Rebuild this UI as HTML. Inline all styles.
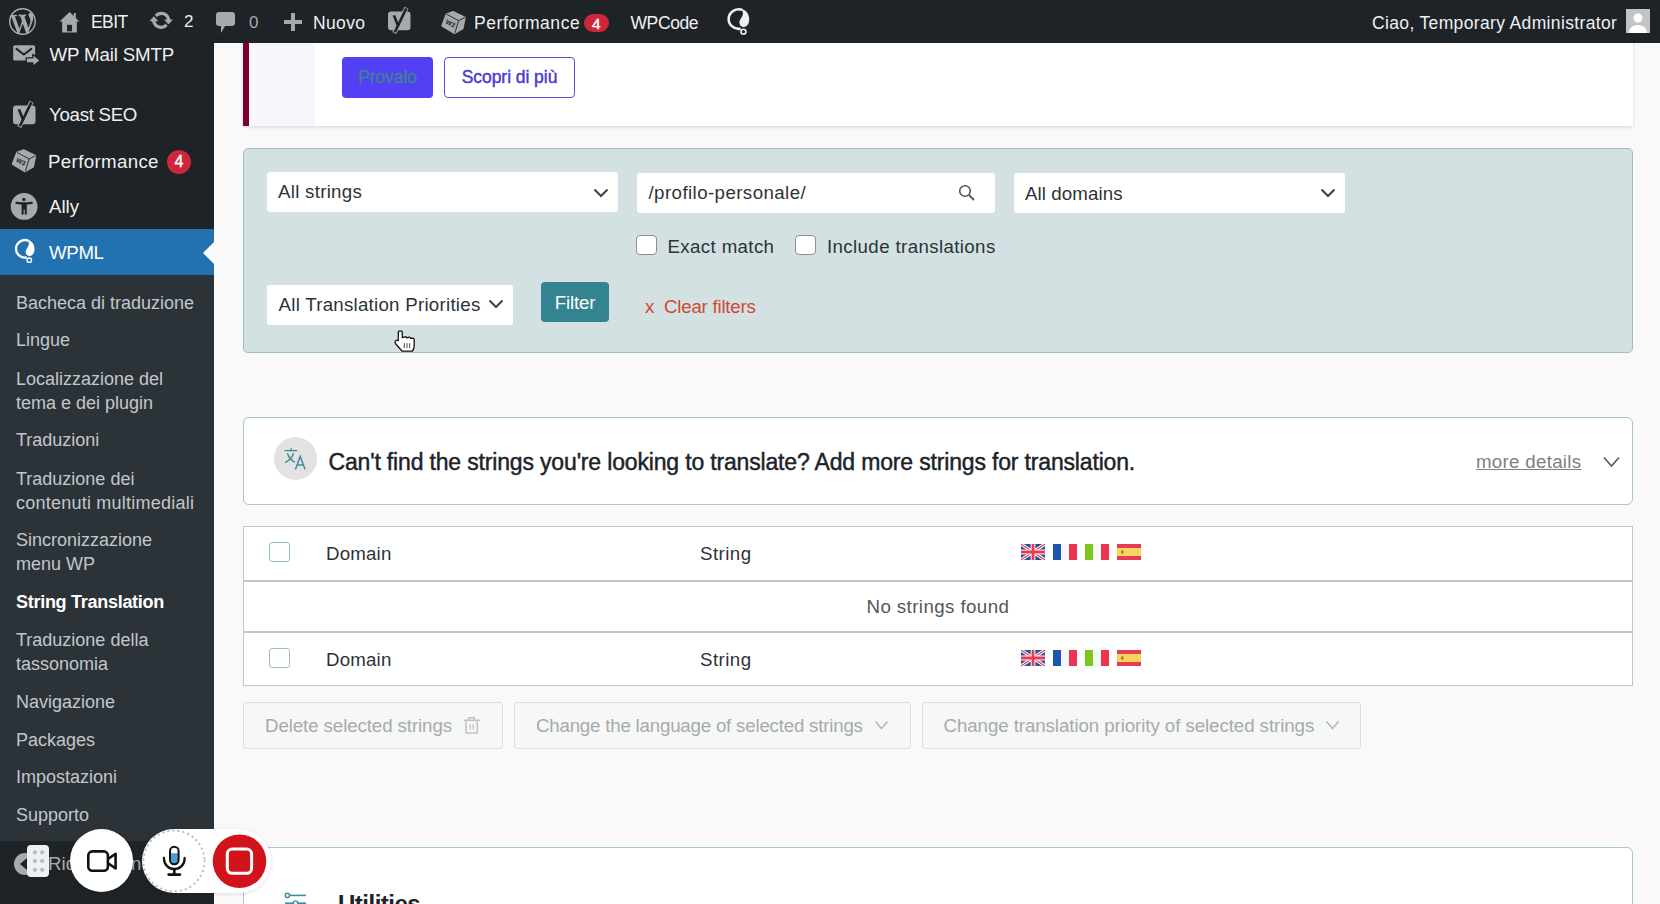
<!DOCTYPE html>
<html><head><meta charset="utf-8">
<style>
*{box-sizing:border-box;margin:0;padding:0}
html,body{width:1660px;height:904px;overflow:hidden;background:#f9f9f9;font-family:"Liberation Sans",sans-serif;position:relative}
.a{position:absolute;white-space:nowrap}
#bar{position:absolute;z-index:10;left:0;top:0;width:1660px;height:43px;background:#1d2327;color:#f0f0f1;font-size:17px}
#side{position:absolute;left:0;top:43px;width:214px;height:861px;background:#1d2327}
#sub{position:absolute;left:0;top:275px;width:214px;height:566px;background:#2c3338}
.mm{color:#f0f0f1;font-size:18.7px}
.sm{color:#c3c6c9;font-size:18px;line-height:24px}
.ic{fill:#a7aaad}
.box{position:absolute;left:243px;width:1390px}
.sel{position:absolute;background:#fff;border-radius:3px;color:#2c3338;font-size:18.7px}
.chev{position:absolute}
.cb{position:absolute;width:21px;height:20px;border:1.5px solid #8c8f94;border-radius:4px;background:#fff}
.btn{position:absolute;border:1.5px solid #dcdcde;background:#f6f7f7;border-radius:3px;color:#a7aaad;font-size:18.7px;height:47px;top:702px}
</style></head><body>

<!-- ADMIN BAR -->
<div id="bar">
  <!-- WP logo -->
  <svg class="a" style="left:9px;top:8px" width="27" height="27" viewBox="0 0 20 20"><path fill="#a7aaad" d="M20 10c0-5.52-4.48-10-10-10S0 4.48 0 10s4.48 10 10 10 10-4.48 10-10zM7.780 15.370L4.370 6.220c.55-.02 1.170-.08 1.170-.08.5-.06.44-1.130-.06-1.110 0 0-1.450.11-2.370.11-.18 0-.37 0-.58-.01C4.120 2.690 6.870 1.110 10 1.110c2.330 0 4.450.87 6.050 2.340-.68-.11-1.650.39-1.650 1.580 0 .74.45 1.360.9 2.100.35.61.55 1.360.55 2.460 0 1.490-1.400 5-1.400 5l-3.030-8.370c.54-.02.82-.17.82-.17.5-.05.44-1.250-.06-1.220 0 0-1.440.12-2.380.12-.87 0-2.330-.12-2.330-.12-.5-.03-.56 1.200-.06 1.220l.92.08 1.260 3.410zM17.410 10c.24-.64.74-1.870.43-4.250.7 1.290 1.050 2.710 1.050 4.250 0 3.290-1.730 6.240-4.400 7.780.97-2.590 1.940-5.200 2.920-7.780zM6.100 18.090C3.120 16.650 1.110 13.530 1.110 10c0-1.300.23-2.480.72-3.590C3.250 10.300 4.670 14.200 6.100 18.090zm4.030-6.630l2.580 6.980c-.86.29-1.760.45-2.710.45-.79 0-1.570-.11-2.290-.33.81-2.380 1.620-4.740 2.420-7.100z"/></svg>
  <!-- home -->
  <svg class="a" style="left:59px;top:11px" width="21" height="22" viewBox="0 0 20 21"><path fill="#a7aaad" d="M10 1 L0.5 10 H3 V20.5 H17 V10 H19.5 L16 6.7 V2 H14 V4.8 Z"/><rect x="7.6" y="13.2" width="4.8" height="6.2" fill="#1d2327"/></svg>
  <div class="a" style="left:91px;top:12px;font-size:17.5px;letter-spacing:-0.6px">EBIT</div>
  <!-- updates -->
  <svg class="a" style="left:0;top:0" width="200" height="43" viewBox="0 0 200 43"><g transform="translate(148.4 7.6) scale(1.28)"><path fill="#a7aaad" d="M10.2 3.28c3.53 0 6.43 2.61 6.92 6h2.08l-3.5 4-3.5-4h2.32c-.45-1.97-2.21-3.450-4.320-3.450-1.450 0-2.730.71-3.540 1.780L4.950 5.660C6.230 4.200 8.110 3.280 10.200 3.280zm-.4 13.440c-3.520 0-6.430-2.610-6.920-6H.8l3.500-4c1.170 1.330 2.330 2.670 3.500 4H5.480c.450 1.970 2.210 3.450 4.320 3.450 1.450 0 2.730-.710 3.540-1.780l1.710 1.950c-1.280 1.460-3.150 2.380-5.250 2.380z"/></g></svg>
  <div class="a" style="left:184px;top:12px;font-size:17px">2</div>
  <!-- comments -->
  <svg class="a" style="left:216px;top:12px" width="19" height="21" viewBox="0 0 19 21"><path fill="#a7aaad" d="M3 0h13c1.700 0 3 1.300 3 3v8c0 1.700-1.300 3-3 3H9l-4 7v-7H3c-1.700 0-3-1.300-3-3V3c0-1.700 1.300-3 3-3z"/></svg>
  <div class="a" style="left:249px;top:13px;font-size:17px;color:#a7aaad">0</div>
  <!-- plus -->
  <svg class="a" style="left:284px;top:13px" width="18" height="18" viewBox="0 0 18 18"><path fill="#a7aaad" d="M7 0h4v7h7v4h-7v7H7v-7H0V7h7z"/></svg>
  <div class="a" style="left:313px;top:12.5px;font-size:17.5px;letter-spacing:0.35px">Nuovo</div>
  <!-- yoast -->
  <svg class="a" style="left:0;top:0" width="800" height="43" viewBox="0 0 800 43">
    <g transform="translate(375 -94)"><rect x="13" y="105.6" width="22.5" height="18.6" rx="3.2" fill="#a7aaad"/>
    <path d="M31.5 101.8 L19.3 127" stroke="#a7aaad" stroke-width="4.4"/>
    <path d="M31.3 102.4 L19.8 126.2" stroke="#1d2327" stroke-width="2.6"/>
    <path d="M17.6 109.4 L20.4 109.2 L24.3 119.6 L22.6 122.3 Z" fill="#1d2327"/></g>
    <g transform="translate(429.5 -138.3)"><path d="M16.9 152.4 L23.6 150 L35.5 155.7 L33.3 166.8 L24.9 171.6 L12.5 164.1 Z" fill="#a7aaad" stroke="#a7aaad" stroke-width="1.5" stroke-linejoin="round"/>
    <path d="M16.9 152.4 L29.1 159 L35.5 155.7 M29.1 159 L25.4 171.4" fill="none" stroke="#1d2327" stroke-width="0.9"/>
    <text x="0" y="0" font-size="6.5" font-weight="bold" font-family="Liberation Sans" fill="#1d2327" transform="translate(15.6 161.5) rotate(27)">W3</text></g>
    <g transform="translate(724.8 7) scale(1.11) translate(-12.5 -238)">
      <path d="M28.2 240.6 A9.1 8.8 0 1 0 26.8 257.5" fill="none" stroke="#f0f0f1" stroke-width="2.3"/>
      <path d="M27.2 239.6 C32.2 240.8 34.6 244.8 34.5 249.3 C34.4 253.5 32.2 256 29.7 256 C27 256 25.3 253.6 25.7 251.2 C26.1 248.8 28.5 247 28.8 244.5 C29 243 28.5 241.2 27.2 239.6 Z" fill="#f0f0f1"/>
      <circle cx="29.3" cy="260.2" r="2.2" fill="none" stroke="#f0f0f1" stroke-width="1.4"/>
    </g>
  </svg>
  <div class="a" style="left:474px;top:12.5px;font-size:17.5px;letter-spacing:0.55px">Performance</div>
  <div class="a" style="left:584px;top:14px;width:24.5px;height:18px;border-radius:9px;background:#d0263b;color:#fff;font-size:15.5px;-webkit-text-stroke:0.4px #fff;text-align:center;line-height:19px">4</div>
  <div class="a" style="left:630.5px;top:12.5px;font-size:17.5px;letter-spacing:-0.4px">WPCode</div>
  <div class="a" style="left:1372px;top:12.5px;font-size:17.5px;letter-spacing:0.35px">Ciao, Temporary Administrator</div>
  <div class="a" style="left:1626px;top:9px;width:24px;height:24px;background:#c3c4c7"><svg width="24" height="24" viewBox="0 0 24 24"><circle cx="12" cy="9" r="4.500" fill="#fff"/><path fill="#fff" d="M3 24c0-5 4-8 9-8s9 3 9 8z"/></svg></div>
</div>

<!-- SIDEBAR -->
<div id="side"></div>
<div id="sub"></div>
<div id="sidecontent">
  <svg class="a" style="left:0;top:0;z-index:5" width="214" height="904" viewBox="0 0 214 904">
    <!-- mail smtp -->
    <rect x="13.2" y="45.3" width="21.9" height="15.3" rx="1.6" fill="#a7aaad"/>
    <path d="M15.8 48.4 L23.9 54.6 L32 48.4" fill="none" stroke="#1d2327" stroke-width="2"/>
    <path d="M26.2 57.9 h6.6 v-3.6 l7.4 6.1 l-7.4 6.2 v-3.7 h-6.6 z" fill="#a7aaad" stroke="#1d2327" stroke-width="1.3" stroke-linejoin="round"/>
    <!-- yoast -->
    <rect x="13" y="105.6" width="22.5" height="18.6" rx="3.2" fill="#a7aaad"/>
    <path d="M31.5 101.8 L19.3 127" stroke="#a7aaad" stroke-width="4.4"/>
    <path d="M31.3 102.4 L19.8 126.2" stroke="#1d2327" stroke-width="2.6"/>
    <path d="M17.6 109.4 L20.4 109.2 L24.3 119.6 L22.6 122.3 Z" fill="#1d2327"/>
    <!-- performance cube -->
    <path d="M16.9 152.4 L23.6 150 L35.5 155.7 L33.3 166.8 L24.9 171.6 L12.5 164.1 Z" fill="#a7aaad" stroke="#a7aaad" stroke-width="1.5" stroke-linejoin="round"/>
    <path d="M16.9 152.4 L29.1 159 L35.5 155.7 M29.1 159 L25.4 171.4" fill="none" stroke="#1d2327" stroke-width="0.9"/>
    <text x="0" y="0" font-size="6.5" font-weight="bold" font-family="Liberation Sans" fill="#1d2327" transform="translate(15.6 161.5) rotate(27)">W3</text>
    <!-- ally -->
    <circle cx="24.15" cy="206.4" r="13.4" fill="#a7aaad"/>
    <circle cx="23.9" cy="199.4" r="1.7" fill="#1d2327"/>
    <path d="M16.4 202.8 Q24 204 31.8 202.8" stroke="#1d2327" stroke-width="2.2" stroke-linecap="round" fill="none"/>
    <path d="M21.6 203 h5.2 v11.6 h-2.1 v-5 h-1 v5 h-2.1 z" fill="#1d2327"/>
    <!-- wpml -->
    <path d="M28.2 240.6 A9.1 8.8 0 1 0 26.8 257.5" fill="none" stroke="#fff" stroke-width="2.3"/>
    <path d="M27.2 239.6 C32.2 240.8 34.6 244.8 34.5 249.3 C34.4 253.5 32.2 256 29.7 256 C27 256 25.3 253.6 25.7 251.2 C26.1 248.8 28.5 247 28.8 244.5 C29 243 28.5 241.2 27.2 239.6 Z" fill="#fff"/>
    <circle cx="29.3" cy="260.2" r="2.2" fill="none" stroke="#fff" stroke-width="1.4"/>
  </svg>

  <div class="a mm" style="left:49.5px;top:44px;letter-spacing:-0.15px">WP Mail SMTP</div>
  <div class="a mm" style="left:49px;top:104px;letter-spacing:-0.3px">Yoast SEO</div>
  <div class="a mm" style="left:48px;top:150.5px;letter-spacing:0.35px">Performance</div>
  <div class="a" style="left:167px;top:150px;width:24px;height:24px;border-radius:12px;background:#d0263b;color:#fff;font-size:16px;-webkit-text-stroke:0.4px #fff;text-align:center;line-height:24px">4</div>
  <div class="a mm" style="left:49px;top:196px">Ally</div>
  <div class="a" style="left:0;top:229px;width:214px;height:46px;background:#2271b1"></div>
  <div class="a mm" style="left:49px;top:241.5px;color:#fff;letter-spacing:-0.35px">WPML</div>
  <svg class="a" style="left:203px;top:242px" width="11" height="22" viewBox="0 0 11 22"><path fill="#f9f9f9" d="M11 0 L0 11 L11 22 Z"/></svg>
  <div class="a sm" style="left:16px;top:291px">Bacheca di traduzione</div>
  <div class="a sm" style="left:16px;top:328px">Lingue</div>
  <div class="a sm" style="left:16px;top:367px">Localizzazione del<br>tema e dei plugin</div>
  <div class="a sm" style="left:16px;top:428px">Traduzioni</div>
  <div class="a sm" style="left:16px;top:467px">Traduzione dei<br><span style="letter-spacing:0.23px">contenuti multimediali</span></div>
  <div class="a sm" style="left:16px;top:528px">Sincronizzazione<br>menu WP</div>
  <div class="a sm" style="left:16px;top:590px;color:#fff;font-weight:bold;letter-spacing:-0.28px">String Translation</div>
  <div class="a sm" style="left:16px;top:628px">Traduzione della<br>tassonomia</div>
  <div class="a sm" style="left:16px;top:690px">Navigazione</div>
  <div class="a sm" style="left:16px;top:728px">Packages</div>
  <div class="a sm" style="left:16px;top:765px">Impostazioni</div>
  <div class="a sm" style="left:16px;top:803px">Supporto</div>
  <div class="a sm" style="left:48px;top:851.5px;color:#a7aaad;font-size:18.7px">Riduci menu</div>
  <svg class="a" style="left:14px;top:853px" width="22" height="22" viewBox="0 0 22 22"><circle cx="11" cy="11" r="11" fill="#a7aaad"/><path fill="#1d2327" d="M13 5 L6 11 L13 17 Z"/></svg>
</div>

<!-- NOTICE -->
<div class="box" style="top:30px;height:96px;background:#fff;box-shadow:0 1px 3px rgba(0,0,0,.15)">
  <div class="a" style="left:0;top:0;width:6px;height:96px;background:#7d0034"></div>
  <div class="a" style="left:6px;top:0;width:66px;height:96px;background:#f7f6fc"></div>
  <div class="a" style="left:99px;top:27px;width:91px;height:41px;background:#5340f2;border-radius:4px;color:#3f7f9c;font-size:17.5px;-webkit-text-stroke:0.45px #3f7f9c;text-align:center;line-height:40px;letter-spacing:-0.1px">Provalo</div>
  <div class="a" style="left:201px;top:27px;width:131px;height:41px;border:1.5px solid #5b4fd0;border-radius:4px;color:#4b3bcf;font-size:17.5px;-webkit-text-stroke:0.45px #4b3bcf;text-align:center;line-height:38px;letter-spacing:-0.05px">Scopri di più</div>
</div>

<!-- FILTER PANEL -->
<div class="box" style="top:148px;height:205px;background:#d4e1e3;border:1.5px solid #9fbcc1;border-radius:5px"></div>
<div class="sel" style="left:267px;top:172px;width:351px;height:40px"><div class="a" style="left:11px;top:9px;letter-spacing:0.28px">All strings</div></div>
<svg class="chev" style="left:593px;top:188px" width="16" height="10" viewBox="0 0 16 10"><path d="M1.500 1.500 L8 8 L14.500 1.500" fill="none" stroke="#3c434a" stroke-width="2"/></svg>
<div class="sel" style="left:637px;top:173px;width:358px;height:40px"><div class="a" style="left:11.5px;top:8.5px;letter-spacing:0.42px">/profilo-personale/</div></div>
<svg class="a" style="left:958px;top:184px" width="18" height="17" viewBox="0 0 18 17"><circle cx="7" cy="7" r="5.300" fill="none" stroke="#50575e" stroke-width="1.600"/><path d="M11 11 L16 16" stroke="#50575e" stroke-width="1.800"/></svg>
<div class="sel" style="left:1014px;top:173px;width:331px;height:40px"><div class="a" style="left:11px;top:9.5px;letter-spacing:0.1px">All domains</div></div>
<svg class="chev" style="left:1320px;top:188px" width="16" height="11" viewBox="0 0 16 11"><path d="M1.500 1.500 L8 8 L14.500 1.500" fill="none" stroke="#3c434a" stroke-width="2"/></svg>
<div class="cb" style="left:636px;top:235px"></div>
<div class="a" style="left:667.5px;top:235.5px;font-size:18.7px;color:#2c3338;letter-spacing:0.37px">Exact match</div>
<div class="cb" style="left:795px;top:235px"></div>
<div class="a" style="left:827px;top:235.5px;font-size:18.7px;color:#2c3338;letter-spacing:0.38px">Include translations</div>
<div class="sel" style="left:267px;top:285px;width:246px;height:40px"><div class="a" style="left:11.5px;top:9px;letter-spacing:0.26px">All Translation Priorities</div></div>
<svg class="chev" style="left:488px;top:299px" width="16" height="11" viewBox="0 0 16 11"><path d="M1.500 1.500 L8 8 L14.500 1.500" fill="none" stroke="#3c434a" stroke-width="2"/></svg>
<div class="a" style="left:541px;top:282px;width:68px;height:40px;background:#33848f;border-radius:4px;color:#fff;font-size:18.7px;text-align:center;line-height:42px;letter-spacing:-0.2px">Filter</div>
<div class="a" style="left:645px;top:296px;font-size:18.7px;color:#cc4a33;letter-spacing:-0.23px">x&nbsp; Clear filters</div>

<!-- INFO BOX -->
<div class="box" style="top:417px;height:88px;background:#fff;border:1.5px solid #a5c7cb;border-radius:6px"></div>
<div class="a" style="left:274px;top:437px;width:43px;height:43px;border-radius:50%;background:#e2e2e2"></div>
<svg class="a" style="left:280px;top:444px" width="30" height="30" viewBox="280 444 30 30"><g fill="none" stroke="#3e8a94" stroke-width="1.4"><path d="M291.2 448.2 V450.6 M284.6 450.6 H297.2"/><path d="M287.4 453.3 Q289.5 459.5 294.9 462.4"/><path d="M293.6 453.3 Q291.5 459.5 285.2 462.6"/><path d="M295.4 469.6 L300.2 456.4 L305.1 469.6 M297.1 465 H303.4"/></g></svg>

<div class="a" style="left:328.5px;top:449px;font-size:23px;color:#1d2327;-webkit-text-stroke:0.45px #1d2327;letter-spacing:-0.165px">Can't find the strings you're looking to translate? Add more strings for translation.</div>
<div class="a" style="left:1476px;top:451px;font-size:18.7px;color:#7b7f84;text-decoration:underline;letter-spacing:0.3px">more details</div>
<svg class="a" style="left:1603px;top:456px" width="17" height="13" viewBox="0 0 17 13"><path d="M1 1.500 L8.500 10 L16 1.500" fill="none" stroke="#50575e" stroke-width="1.500"/></svg>

<!-- TABLE -->
<div class="box" style="top:526px;height:160px;background:#fff;border:1.5px solid #c3c4c7"></div>
<div class="a" style="left:244px;top:580px;width:1389px;height:1.5px;background:#c3c4c7"></div>
<div class="a" style="left:244px;top:631px;width:1389px;height:1.5px;background:#c3c4c7"></div>
<div class="cb" style="left:269px;top:542px;border-color:#9bbfc6;border-radius:3px"></div>
<div class="a" style="left:326px;top:543px;font-size:18.7px;color:#2c3338;letter-spacing:0.18px">Domain</div>
<div class="a" style="left:700px;top:543px;font-size:18.7px;color:#2c3338;letter-spacing:0.45px">String</div>
<div class="a" style="left:866.5px;top:595.5px;font-size:18.7px;color:#50575e;letter-spacing:0.42px">No strings found</div>
<div class="cb" style="left:269px;top:648px;border-color:#9bbfc6;border-radius:3px"></div>
<div class="a" style="left:326px;top:649px;font-size:18.7px;color:#2c3338;letter-spacing:0.18px">Domain</div>
<div class="a" style="left:700px;top:649px;font-size:18.7px;color:#2c3338;letter-spacing:0.45px">String</div>

<!-- BULK BUTTONS -->
<div class="btn" style="left:243px;width:260px"><div class="a" style="left:21px;top:12px;letter-spacing:-0.09px">Delete selected strings</div></div>
<div class="btn" style="left:514px;width:397px"><div class="a" style="left:21px;top:12px;letter-spacing:-0.2px">Change the language of selected strings</div></div>
<div class="btn" style="left:922px;width:439px"><div class="a" style="left:20.5px;top:12px;letter-spacing:-0.07px">Change translation priority of selected strings</div></div>

<!-- UTILITIES -->
<div class="box" style="top:847px;height:80px;background:#fff;border:1.5px solid #a5c7cb;border-radius:6px"></div>
<div class="a" style="left:338px;top:890px;font-size:24px;font-weight:bold;color:#1d2327;letter-spacing:-0.5px">Utilities</div>

<svg class="a" style="left:1021px;top:544px" width="24" height="16" viewBox="0 0 60 40"><rect width="60" height="40" fill="#2a4e9a"/><path d="M0 0L60 40M60 0L0 40" stroke="#fff" stroke-width="8"/><path d="M0 0L60 40M60 0L0 40" stroke="#e63b52" stroke-width="3"/><path d="M30 0V40M0 20H60" stroke="#fff" stroke-width="12"/><path d="M30 0V40M0 20H60" stroke="#e63b52" stroke-width="7"/></svg><svg class="a" style="left:1053px;top:544px" width="24" height="16" viewBox="0 0 24 16"><rect width="8" height="16" fill="#1e55b3"/><rect x="8" width="8" height="16" fill="#f4f6fa"/><rect x="16" width="8" height="16" fill="#ec3350"/></svg><svg class="a" style="left:1085px;top:544px" width="24" height="16" viewBox="0 0 24 16"><rect width="8" height="16" fill="#7ec61c"/><rect x="8" width="8" height="16" fill="#f4f8f2"/><rect x="16" width="8" height="16" fill="#ec3350"/></svg><svg class="a" style="left:1117px;top:544px" width="24" height="16" viewBox="0 0 24 16"><rect width="24" height="16" fill="#e63b52"/><rect y="4" width="24" height="8" fill="#f6d55c"/><rect x="4" y="6.5" width="2.5" height="3" fill="#b0743a"/></svg><svg class="a" style="left:1021px;top:650px" width="24" height="16" viewBox="0 0 60 40"><rect width="60" height="40" fill="#2a4e9a"/><path d="M0 0L60 40M60 0L0 40" stroke="#fff" stroke-width="8"/><path d="M0 0L60 40M60 0L0 40" stroke="#e63b52" stroke-width="3"/><path d="M30 0V40M0 20H60" stroke="#fff" stroke-width="12"/><path d="M30 0V40M0 20H60" stroke="#e63b52" stroke-width="7"/></svg><svg class="a" style="left:1053px;top:650px" width="24" height="16" viewBox="0 0 24 16"><rect width="8" height="16" fill="#1e55b3"/><rect x="8" width="8" height="16" fill="#f4f6fa"/><rect x="16" width="8" height="16" fill="#ec3350"/></svg><svg class="a" style="left:1085px;top:650px" width="24" height="16" viewBox="0 0 24 16"><rect width="8" height="16" fill="#7ec61c"/><rect x="8" width="8" height="16" fill="#f4f8f2"/><rect x="16" width="8" height="16" fill="#ec3350"/></svg><svg class="a" style="left:1117px;top:650px" width="24" height="16" viewBox="0 0 24 16"><rect width="24" height="16" fill="#e63b52"/><rect y="4" width="24" height="8" fill="#f6d55c"/><rect x="4" y="6.5" width="2.5" height="3" fill="#b0743a"/></svg>
<!-- trash icon -->
<svg class="a" style="left:462px;top:715px" width="20" height="21" viewBox="462 715 20 21"><path d="M464 720.2 h16 M468.8 720 v-2.3 h5.6 v2.3" fill="none" stroke="#c0c2c4" stroke-width="1.6"/><path d="M466 720.5 v12.6 h11.3 v-12.6" fill="none" stroke="#c0c2c4" stroke-width="1.5"/><path d="M470.2 724 v5.6 M473.2 724 v5.6" stroke="#c0c2c4" stroke-width="1.3"/></svg>
<svg class="a" style="left:874px;top:720px" width="15" height="11" viewBox="0 0 15 11"><path d="M1.5 1.5 L7.5 8.5 L13.5 1.5" fill="none" stroke="#b5b7ba" stroke-width="1.5"/></svg>
<svg class="a" style="left:1325px;top:720px" width="15" height="11" viewBox="0 0 15 11"><path d="M1.5 1.5 L7.5 8.5 L13.5 1.5" fill="none" stroke="#b5b7ba" stroke-width="1.5"/></svg>
<!-- utilities icon -->
<svg class="a" style="left:282px;top:890px" width="28" height="14" viewBox="282 890 28 14"><circle cx="287.4" cy="895.4" r="2.1" fill="none" stroke="#3d8e99" stroke-width="1.4"/><path d="M289.6 895.4 H306" stroke="#3d8e99" stroke-width="1.6"/><path d="M285 903.2 H306" stroke="#3d8e99" stroke-width="1.6"/><circle cx="295.6" cy="903" r="2.1" fill="#fff" stroke="#3d8e99" stroke-width="1.4"/></svg>
<!-- cursor -->
<svg class="a" style="left:392px;top:328px;z-index:30" width="25" height="26" viewBox="392 328 25 26"><path d="M398.3 340.5 V332.6 C398.3 330.3 402.3 330.3 402.3 332.6 V337.6 L405.2 336.8 C406 336.6 406.6 337.1 406.7 337.8 L409 337.2 C409.9 337 410.5 337.6 410.6 338.3 L412.4 338.2 C413.5 338.2 414.2 339 414.2 340 V346 C414.2 348.3 413.3 349.8 412.4 351.2 H402.2 L396 344.3 C394.6 342.8 394.8 341.2 396 340.5 C397 340 397.8 340.3 398.3 340.5 Z" fill="#fff" stroke="#111" stroke-width="1.3" stroke-linejoin="round"/><path d="M404.3 343.2 v5 M407 343.2 v5 M409.7 343.2 v5" stroke="#333" stroke-width="0.9"/></svg>

<!-- LOOM CONTROLS -->
<div class="a" style="left:27px;top:845px;width:22px;height:32px;background:#eef0f2;border-radius:4px;z-index:20">
  <svg width="22" height="32" viewBox="0 0 22 32"><g fill="#b9bdc1"><circle cx="7.9" cy="7.4" r="2.1"/><circle cx="15.2" cy="7.4" r="2.1"/><circle cx="7.9" cy="16" r="2.1"/><circle cx="15.2" cy="16" r="2.1"/><circle cx="7.9" cy="24.8" r="2.1"/><circle cx="15.2" cy="24.8" r="2.1"/></g></svg>
</div>
<div class="a" style="left:70px;top:829px;width:63px;height:63px;border-radius:50%;background:#fff;z-index:20;box-shadow:0 1px 4px rgba(0,0,0,.12)">
  <svg width="63" height="63" viewBox="70 829 63 63"><rect x="88.3" y="851.4" width="19.6" height="19.4" rx="4" fill="none" stroke="#111" stroke-width="2.6"/><path d="M108 859 L115.6 853.8 V868.4 L108 863.2" fill="none" stroke="#111" stroke-width="2.6" stroke-linejoin="round"/></svg>
</div>
<div class="a" style="left:142px;top:829px;width:129px;height:64px;border-radius:32px;background:#fff;z-index:20;box-shadow:0 1px 4px rgba(0,0,0,.12)">
  <svg width="129" height="64" viewBox="142 829 129 64">
    <circle cx="174" cy="861" r="30.5" fill="none" stroke="#b8bcc0" stroke-width="2.2" stroke-dasharray="0.1 5" stroke-linecap="round"/>
    <rect x="170" y="846.8" width="8.6" height="17.4" rx="4.3" fill="#4a9fd8"/>
    <path d="M170 846.8 h8.6 v6.4 h-8.6z" fill="#fff"/>
    <rect x="170" y="846.8" width="8.6" height="17.4" rx="4.3" fill="none" stroke="#111" stroke-width="2"/>
    <path d="M164 858 v1 a10.3 10 0 0 0 20.6 0 v-1" fill="none" stroke="#111" stroke-width="2.3" stroke-linecap="round"/>
    <path d="M174.3 869.5 v4.4 M168.6 874.6 h11.4" stroke="#111" stroke-width="2.6" stroke-linecap="round"/>
    <circle cx="239.5" cy="861.2" r="26.8" fill="#d2131b"/>
    <rect x="227.3" y="849" width="24.3" height="24.3" rx="5" fill="none" stroke="#fff" stroke-width="3"/>
  </svg>
</div>
</body></html>
